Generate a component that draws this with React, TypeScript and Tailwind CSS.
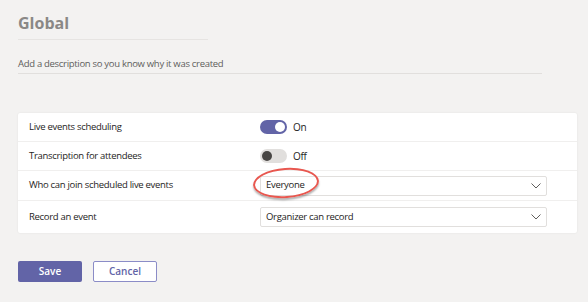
function Chevron() {
  return (
    <svg width="10" height="6" viewBox="0 0 10 6" fill="none" className="text-[#605e5c]">
      <path d="M0.5 0.5 L5 5 L9.5 0.5" stroke="currentColor" strokeWidth="1" />
    </svg>
  );
}

function Toggle({ on }: { on: boolean }) {
  return (
    <div className="flex items-center gap-[6px]">
      <div
        className={
          on
            ? "w-[27px] h-[14px] rounded-full bg-[#6264a7] flex items-center justify-end px-[2px]"
            : "w-[27px] h-[14px] rounded-full bg-[#e1dfdd] flex items-center justify-start px-[2px]"
        }
      >
        <div className={on ? "w-[10px] h-[10px] rounded-full bg-white" : "w-[10px] h-[10px] rounded-full bg-[#484644]"} />
      </div>
      <span className="text-[10px] tracking-[-0.3px] text-[#252423]">{on ? "On" : "Off"}</span>
    </div>
  );
}

function Select({ value }: { value: string }) {
  return (
    <div className="w-[287px] h-[20px] bg-white border border-[#e1dfdd] rounded-[2px] flex items-center justify-between pl-[5px] pr-[5px]">
      <span className="text-[9.5px] tracking-[-0.3px] text-[#252423]">{value}</span>
      <Chevron />
    </div>
  );
}

function Row({ label, children, h, last }: { label: string; children: React.ReactNode; h: string; last?: boolean }) {
  return (
    <div className={`flex items-center ${h} ${last ? "" : "border-b border-[#f0efee]"}`}>
      <div className="w-[242px] pl-[11px] text-[9.5px] tracking-[-0.3px] text-[#252423]">{label}</div>
      <div className="flex-1">{children}</div>
    </div>
  );
}

export default function App() {
  return (
    <div
      className="relative w-[588px] h-[302px] bg-[#f3f2f1] overflow-hidden px-[18px]"
      style={{ fontFamily: '"Open Sans", "Noto Sans", sans-serif' }}
    >
      <div className="w-[190px] h-[40px] border-b border-[#e6e4e2] pt-[12px]">
        <h1 className="text-[16px] font-bold text-[#8a8886] leading-[22px]">Global</h1>
      </div>
      <div className="w-[524px] h-[34px] border-b border-[#e1dfdd] pt-[17px]">
        <p className="text-[9.5px] tracking-[-0.3px] text-[#605e5c] leading-[14px]">
          Add a description so you know why it was created
        </p>
      </div>

      <div className="mt-[39px] w-[559px] bg-white rounded-[2px] shadow-[0_0_2px_rgba(0,0,0,0.08)]">
        <Row label="Live events scheduling" h="h-[29px]">
          <Toggle on />
        </Row>
        <Row label="Transcription for attendees" h="h-[29px]">
          <Toggle on={false} />
        </Row>
        <Row label="Who can join scheduled live events" h="h-[30px]">
          <Select value="Everyone" />
        </Row>
        <Row label="Record an event" h="h-[32px]" last>
          <Select value="Organizer can record" />
        </Row>
      </div>

      <div className="mt-[28px] flex gap-[11px]">
        <button className="w-[64px] h-[21px] rounded-[2px] bg-[#6264a7] text-white text-[10px] font-semibold">
          Save
        </button>
        <button className="w-[64px] h-[21px] rounded-[2px] bg-white border border-[#8b8cc7] text-[#6264a7] text-[10px] font-semibold">
          Cancel
        </button>
      </div>

      <div className="absolute left-[253px] top-[168px] w-[66px] h-[30px] rounded-[50%] border-[2px] border-[#e8574f] shadow-[0_2px_2px_rgba(0,0,0,0.3)] -rotate-[4deg]" />
    </div>
  );
}
